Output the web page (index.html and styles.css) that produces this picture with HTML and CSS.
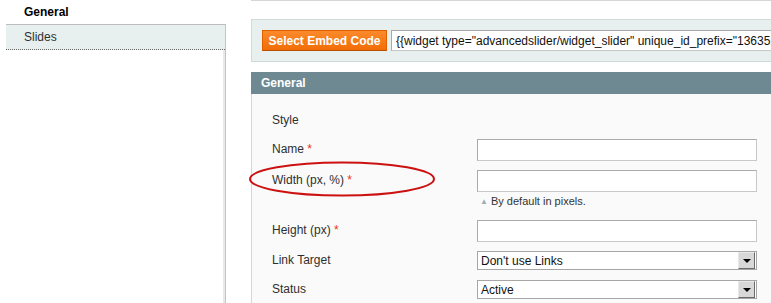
FILE: index.html
```html
<!DOCTYPE html>
<html lang="en">
<head>
    <meta charset="UTF-8">
    <title>Advanced Slider - Edit</title>
    <link rel="stylesheet" href="styles.css">
</head>
<body>
    <div class="page">
        <aside class="side">
            <h3 class="side-title">General</h3>
            <ul class="tabs">
                <li class="tab active">Slides</li>
            </ul>
        </aside>
        <main class="main">
            <div class="embed-box">
                <button type="button" class="btn-orange">Select Embed Code</button>
                <input type="text" class="embed-code" value='{{widget type="advancedslider/widget_slider" unique_id_prefix="1363512345"}}'>
            </div>

            <div class="section-head">General</div>
            <div class="fieldset">
                <svg class="mark" width="190" height="38" viewBox="0 0 190 38">
                    <ellipse cx="95" cy="19" rx="92" ry="16.5" fill="none" stroke="#cc1111" stroke-width="2"/>
                </svg>

                <div class="row">
                    <label class="label">Style</label>
                </div>
                <div class="row">
                    <label class="label">Name <span class="req">*</span></label>
                    <div class="value"><input type="text" class="input"></div>
                </div>
                <div class="row">
                    <label class="label">Width (px, %) <span class="req">*</span></label>
                    <div class="value">
                        <input type="text" class="input">
                        <p class="note"><span class="note-arrow">&#9650;</span> By default in pixels.</p>
                    </div>
                </div>
                <div class="row">
                    <label class="label">Height (px) <span class="req">*</span></label>
                    <div class="value"><input type="text" class="input"></div>
                </div>
                <div class="row row-select">
                    <label class="label">Link Target</label>
                    <div class="value">
                        <div class="select">
                            <span class="select-text">Don't use Links</span>
                            <span class="select-btn"></span>
                        </div>
                    </div>
                </div>
                <div class="row row-select">
                    <label class="label">Status</label>
                    <div class="value">
                        <div class="select">
                            <span class="select-text">Active</span>
                            <span class="select-btn"></span>
                        </div>
                    </div>
                </div>
            </div>
        </main>
    </div>
</body>
</html>
```

FILE: styles.css
```css
html, body {
    margin: 0;
    padding: 0;
    overflow: hidden;
    background: #fff;
}

body {
    font-family: Arial, "Liberation Sans", sans-serif;
    font-size: 12px;
    color: #2f2f2f;
}

.page {
    display: flex;
    height: 303px;
}

/* left column with tabs */
.side {
    width: 220px;
    flex: none;
    padding-left: 6px;
    display: flex;
    flex-direction: column;
}

.side-title {
    margin: 0;
    height: 24px;
    line-height: 24px;
    padding-left: 18px;
    font-size: 12px;
    font-weight: bold;
    color: #000;
}

.tabs {
    list-style: none;
    margin: 0;
    padding: 0;
    flex: 1;
    border-right: 1px solid #c4c4c4;
    box-shadow: inset -2px 0 0 #e8e8e8;
}

.tab {
    height: 24px;
    line-height: 24px;
    padding-left: 18px;
    border-top: 1px solid #bdbdbd;
    border-bottom: 1px dotted #6a6a6a;
}

.tab.active {
    background: #e7efef;
}

/* main area */
.main {
    flex: none;
    width: 620px;
    margin-left: 25px;
    border-top: 1px solid #d6d6d6;
}

.embed-box {
    display: flex;
    align-items: center;
    gap: 4px;
    margin-top: 18px;
    padding: 10px;
    background: #e7efef;
    border: 1px solid #cfdada;
}

.btn-orange {
    height: 21px;
    width: 125px;
    padding: 0;
    font-family: Arial, "Liberation Sans", sans-serif;
    font-size: 12px;
    font-weight: bold;
    color: #fff;
    background: linear-gradient(#fb8a2c, #f26d06);
    border: 1px solid #e06000;
    border-bottom-color: #b94f00;
}

.embed-code {
    flex: 1;
    height: 21px;
    box-sizing: border-box;
    padding: 0 4px;
    font-family: Arial, "Liberation Sans", sans-serif;
    font-size: 12px;
    color: #111;
    border: 1px solid;
    border-color: #a8a8a8 #c8c8c8 #c8c8c8 #a8a8a8;
}

.section-head {
    margin-top: 10px;
    height: 22px;
    line-height: 22px;
    padding-left: 10px;
    background: #6f8992;
    color: #fff;
    font-weight: bold;
}

.fieldset {
    position: relative;
    background: #fafafa;
    border-left: 1px solid #d6d6d6;
    padding: 16px 0 20px 20px;
    display: flex;
    flex-direction: column;
    gap: 9px;
}

.fieldset .row:first-of-type {
    margin-bottom: -1px;
}

.mark {
    position: absolute;
    left: -5px;
    top: 66px;
}

.row {
    display: flex;
    align-items: flex-start;
    min-height: 21px;
}

.row-select {
    min-height: 20px;
}

.label {
    width: 205px;
    flex: none;
    line-height: 20px;
}

.row-select .label {
    line-height: 19px;
}

.req {
    color: #eb340a;
}

.value {
    width: 280px;
}

.input {
    display: block;
    width: 280px;
    height: 22px;
    box-sizing: border-box;
    margin: 0;
    border: 1px solid;
    border-color: #aaa #c8c8c8 #c8c8c8 #aaa;
    background: #fff;
}

.note {
    margin: 2px 0 2px 3px;
    line-height: 14px;
    font-size: 11px;
    color: #333;
}

.note-arrow {
    font-size: 8px;
    color: #9fb0b5;
    vertical-align: 1px;
}

.select {
    display: flex;
    align-items: center;
    width: 280px;
    height: 19px;
    box-sizing: border-box;
    border: 1px solid #a6a6a6;
    background: #fff;
}

.select-text {
    flex: 1;
    padding-left: 3px;
    color: #111;
}

.select-btn {
    width: 15px;
    height: 15px;
    margin-right: 1px;
    border: 1px solid;
    border-color: #e8e8e8 #6a6a6a #6a6a6a #e8e8e8;
    background: #d8d8d8;
    display: flex;
    align-items: center;
    justify-content: center;
}

.select-btn::after {
    content: "";
    border-left: 4px solid transparent;
    border-right: 4px solid transparent;
    border-top: 4px solid #000;
    margin-top: 1px;
}
```
